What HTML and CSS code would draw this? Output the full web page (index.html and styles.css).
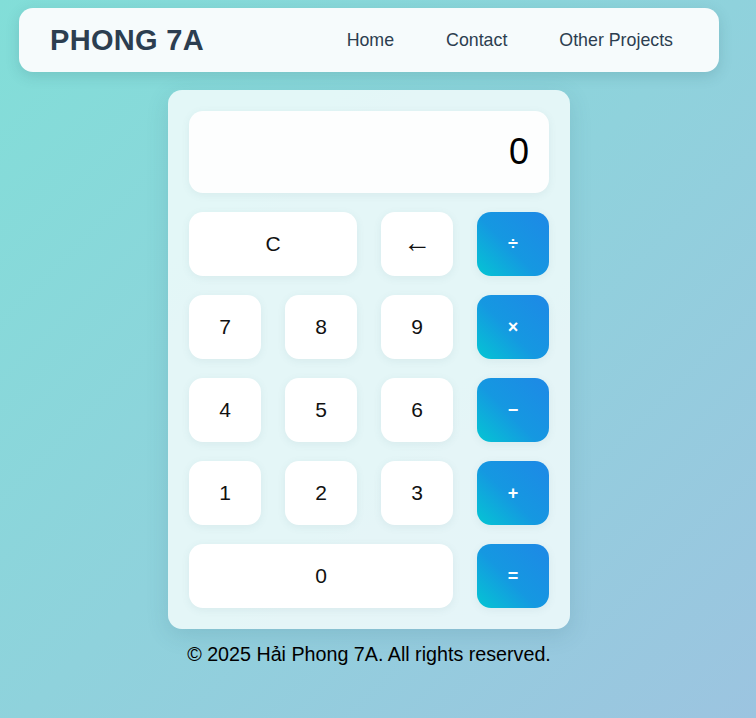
FILE: index.html
```html
<!DOCTYPE html>
<html lang="vi">
<head>
<meta charset="utf-8">
<title>Phong 7A Calculator</title>
<link rel="stylesheet" href="styles.css">
</head>
<body>
  <header class="topbar">
    <div class="logo">PHONG 7A</div>
    <nav class="nav">
      <a href="#">Home</a>
      <a href="#">Contact</a>
      <a href="#">Other Projects</a>
    </nav>
  </header>
  <main class="calc">
    <div class="display">0</div>
    <div class="keys">
      <button class="key span2">C</button>
      <button class="key back">&larr;</button>
      <button class="key op">&divide;</button>
      <button class="key">7</button>
      <button class="key">8</button>
      <button class="key">9</button>
      <button class="key op">&times;</button>
      <button class="key">4</button>
      <button class="key">5</button>
      <button class="key">6</button>
      <button class="key op">&minus;</button>
      <button class="key">1</button>
      <button class="key">2</button>
      <button class="key">3</button>
      <button class="key op">+</button>
      <button class="key span3">0</button>
      <button class="key op">=</button>
    </div>
  </main>
  <footer class="footer">&copy; 2025 Hải Phong 7A. All rights reserved.</footer>
</body>
</html>
```
FILE: styles.css
```css
html, body { height: 100%; }
body {
  margin: 0;
  padding: 8px 37px 0 19px;
  box-sizing: border-box;
  min-height: 718px;
  font-family: "Liberation Sans", Arial, sans-serif;
  background: linear-gradient(135deg, #82ded8 0%, #8fd2dc 50%, #9cc4e0 100%);
  display: flex;
  flex-direction: column;
  align-items: center;
}
.topbar {
  width: 700px;
  height: 64px;
  box-sizing: border-box;
  background: #f6fbfc;
  border-radius: 14px;
  box-shadow: 0 4px 14px rgba(40, 90, 100, 0.18);
  display: flex;
  align-items: center;
  justify-content: space-between;
  padding: 0 46px 0 31px;
}
.logo {
  font-size: 29px;
  font-weight: bold;
  color: #2c3e50;
  letter-spacing: 0.3px;
}
.nav {
  display: flex;
  gap: 52px;
  padding-top: 1px;
}
.nav a {
  color: #2c3e50;
  text-decoration: none;
  font-size: 17.8px;
}
.calc {
  margin-top: 18px;
  width: 402px;
  box-sizing: border-box;
  padding: 21px;
  background: rgba(242, 251, 251, 0.86);
  border-radius: 14px;
  box-shadow: 0 6px 22px rgba(40, 90, 110, 0.15);
}
.display {
  height: 82px;
  background: #fdfefe;
  border-radius: 14px;
  box-shadow: 0 2px 8px rgba(60, 100, 110, 0.08);
  font-size: 36px;
  text-align: right;
  line-height: 82px;
  padding-right: 20px;
  color: #000;
}
.keys {
  margin-top: 19px;
  display: grid;
  grid-template-columns: repeat(4, 72px);
  grid-auto-rows: 64px;
  column-gap: 24px;
  row-gap: 19px;
}
.key {
  border: none;
  border-radius: 14px;
  background: #ffffff;
  font-family: "Liberation Sans", Arial, sans-serif;
  font-size: 21px;
  color: #111;
  box-shadow: 0 2px 8px rgba(60, 100, 110, 0.08);
  padding: 0;
}
.span2 { grid-column: span 2; }
.span3 { grid-column: span 3; }
.back { font-size: 28px; padding-bottom: 2px; }
.op {
  background: linear-gradient(45deg, #04c6d3 0%, #1598e1 45%, #1e88e6 100%);
  color: #ffffff;
  font-size: 18px;
  font-weight: bold;
}
.footer {
  margin-top: 14px;
  font-size: 19.7px;
  color: #000;
  text-align: center;
  width: 402px;
}
```
